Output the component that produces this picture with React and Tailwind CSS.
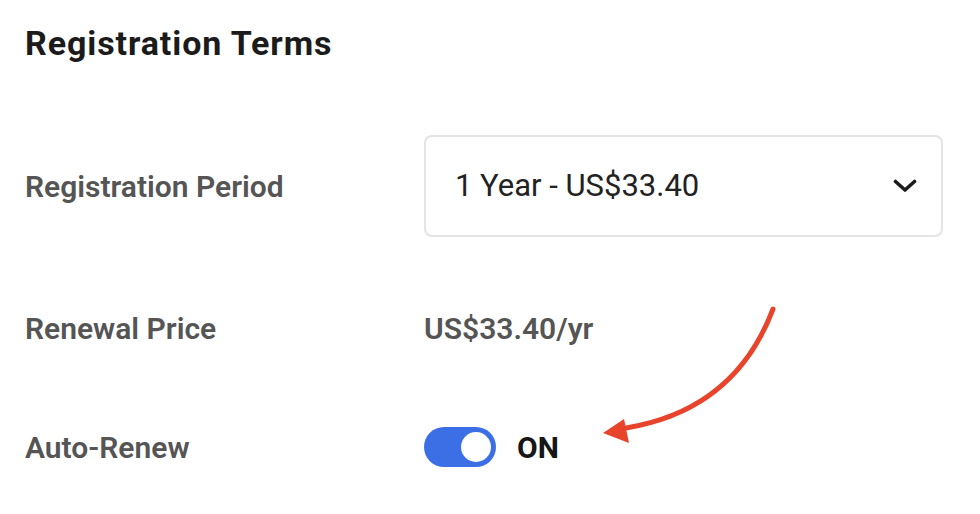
import React from 'react';

function Chevron() {
  return (
    <svg width="24" height="14" viewBox="0 0 24 14" fill="none">
      <path d="M2.5 2.5 L12 11 L21.5 2.5" stroke="#1c1c1c" strokeWidth="3.6" strokeLinecap="round" strokeLinejoin="round" />
    </svg>
  );
}

function Arrow() {
  return (
    <svg className="absolute left-0 top-0 pointer-events-none" width="980" height="514" viewBox="0 0 980 514">
      <path d="M773 309 Q735 410 626 428" stroke="#e8432b" strokeWidth="5" fill="none" strokeLinecap="round" />
      <polygon points="603,433 624,419 629,443" fill="#e8432b" />
    </svg>
  );
}

export default function App() {
  return (
    <div className="relative w-[980px] h-[514px] bg-white overflow-hidden" style={{ fontFamily: 'Roboto, "Liberation Sans", sans-serif' }}>
      <div className="px-[25px] pt-[22px]">
        <h2 className="text-[34px] leading-[42px] font-bold tracking-[0.9px] text-[#1b1b1b]">Registration Terms</h2>

        <div className="mt-[71px] flex flex-col">
          <div className="flex items-center h-[102px]">
            <div className="w-[399px] text-[30px] font-semibold text-[#555555]">Registration Period</div>
            <div className="w-[519px] h-[102px] border-2 border-[#e4e4e4] rounded-[8px] flex items-center justify-between pl-[29px] pr-[24px]">
              <span className="text-[31px] text-[#222222]">1 Year - US$33.40</span>
              <Chevron />
            </div>
          </div>

          <div className="flex items-center h-[56px] mt-[63px]">
            <div className="w-[399px] text-[30px] font-semibold text-[#555555]">Renewal Price</div>
            <div className="text-[30px] font-semibold text-[#555555]">US$33.40/yr</div>
          </div>

          <div className="flex items-center h-[56px] mt-[63px]">
            <div className="w-[399px] text-[30px] font-semibold text-[#555555]">Auto-Renew</div>
            <div className="flex items-center gap-[21px]">
              <div className="w-[72px] h-[40px] rounded-full bg-[#3c6fe6] flex items-center justify-end pr-[5px]">
                <div className="w-[30px] h-[30px] rounded-full bg-white" />
              </div>
              <span className="text-[30px] font-bold text-[#161616]">ON</span>
            </div>
          </div>
        </div>
      </div>
      <Arrow />
    </div>
  );
}
